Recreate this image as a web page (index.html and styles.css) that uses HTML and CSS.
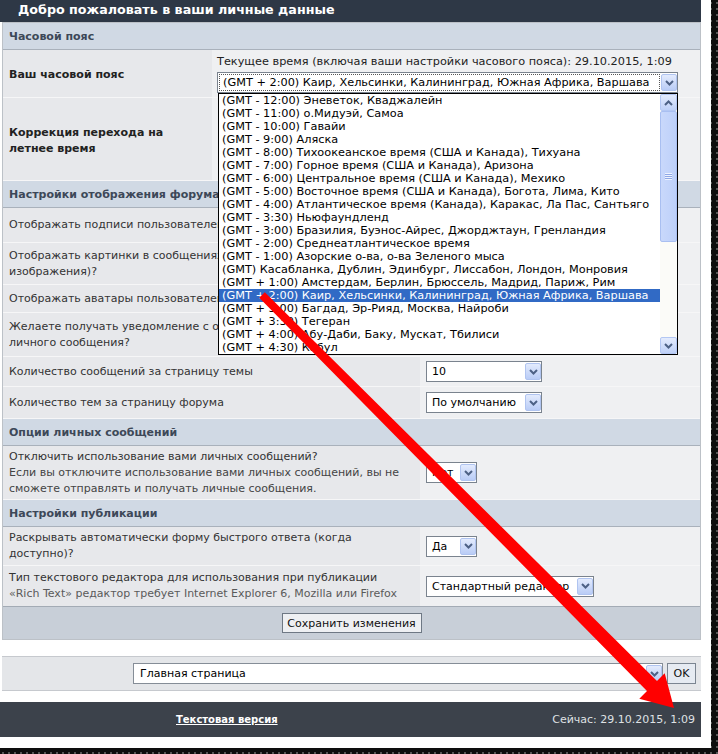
FILE: index.html
```html
<!DOCTYPE html>
<html lang="ru">
<head>
<meta charset="utf-8">
<title>Личные данные</title>
<link rel="stylesheet" href="styles.css">
</head>
<body>
<div class="page">
  <div class="title">Добро пожаловать в ваши личные данные</div>
  <div class="panel">
    <div class="sect">Часовой пояс</div>
    <div class="row tz h48">
      <div class="lbl b">Ваш часовой пояс</div>
      <div class="ctl col">
        <div class="now">Текущее время (включая ваши настройки часового пояса): 29.10.2015, 1:09</div>
        <div class="sel w-tz"><span class="v"><span class="focus">(GMT + 2:00) Каир, Хельсинки, Калининград, Южная Африка, Варшава</span></span><span class="a"><svg width="9" height="6" viewBox="0 0 9 6"><path d="M1 1l3.5 3.5L8 1" fill="none" stroke="#4d6185" stroke-width="2"/></svg></span></div>
      </div>
    </div>
    <div class="row tz h83">
      <div class="lbl b">Коррекция перехода на<br>летнее время</div>
      <div class="ctl"></div>
    </div>
    <div class="sect">Настройки отображения форума</div>
    <div class="row h35">
      <div class="lbl">Отображать подписи пользователей</div>
      <div class="ctl"></div>
    </div>
    <div class="row h42">
      <div class="lbl">Отображать картинки в сообщениях<br>изображения)?</div>
      <div class="ctl"></div>
    </div>
    <div class="row h28">
      <div class="lbl">Отображать аватары пользователей</div>
      <div class="ctl"></div>
    </div>
    <div class="row h44">
      <div class="lbl">Желаете получать уведомление с о<br>личного сообщения?</div>
      <div class="ctl"></div>
    </div>
    <div class="row h30">
      <div class="lbl">Количество сообщений за страницу темы</div>
      <div class="ctl"><div class="sel w116"><span class="v">10</span><span class="a"><svg width="9" height="6" viewBox="0 0 9 6"><path d="M1 1l3.5 3.5L8 1" fill="none" stroke="#4d6185" stroke-width="2"/></svg></span></div></div>
    </div>
    <div class="row h32">
      <div class="lbl">Количество тем за страницу форума</div>
      <div class="ctl"><div class="sel w116"><span class="v">По умолчанию</span><span class="a"><svg width="9" height="6" viewBox="0 0 9 6"><path d="M1 1l3.5 3.5L8 1" fill="none" stroke="#4d6185" stroke-width="2"/></svg></span></div></div>
    </div>
    <div class="sect">Опции личных сообщений</div>
    <div class="row h54">
      <div class="lbl">Отключить использование вами личных сообщений?<br><span class="desc">Если вы отключите использование вами личных сообщений, вы не<br>сможете отправлять и получать личные сообщения.</span></div>
      <div class="ctl"><div class="sel w51"><span class="v">Нет</span><span class="a"><svg width="9" height="6" viewBox="0 0 9 6"><path d="M1 1l3.5 3.5L8 1" fill="none" stroke="#4d6185" stroke-width="2"/></svg></span></div></div>
    </div>
    <div class="sect">Настройки публикации</div>
    <div class="row h39">
      <div class="lbl">Раскрывать автоматически форму быстрого ответа (когда<br>доступно)?</div>
      <div class="ctl"><div class="sel w51"><span class="v">Да</span><span class="a"><svg width="9" height="6" viewBox="0 0 9 6"><path d="M1 1l3.5 3.5L8 1" fill="none" stroke="#4d6185" stroke-width="2"/></svg></span></div></div>
    </div>
    <div class="row h41 last">
      <div class="lbl">Тип текстового редактора для использования при публикации<br><span class="desc light">«Rich Text» редактор требует Internet Explorer 6, Mozilla или Firefox</span></div>
      <div class="ctl"><div class="sel w168"><span class="v">Стандартный редактор</span><span class="a"><svg width="9" height="6" viewBox="0 0 9 6"><path d="M1 1l3.5 3.5L8 1" fill="none" stroke="#4d6185" stroke-width="2"/></svg></span></div></div>
    </div>
    <div class="save"><button class="btn" type="button">Сохранить изменения</button></div>
  </div>

  <div class="nav">
    <div class="sel w530"><span class="v">Главная страница</span><span class="a"><svg width="9" height="6" viewBox="0 0 9 6"><path d="M1 1l3.5 3.5L8 1" fill="none" stroke="#4d6185" stroke-width="2"/></svg></span></div>
    <button class="ok" type="button">OK</button>
  </div>

  <div class="foot">
    <a class="textver" href="#">Текстовая версия</a>
    <span class="clock">Сейчас: 29.10.2015, 1:09</span>
  </div>

  <div class="dd">
    <ul class="opts">
      <li>(GMT - 12:00) Эневеток, Кваджалейн</li>
      <li>(GMT - 11:00) о.Мидуэй, Самоа</li>
      <li>(GMT - 10:00) Гавайи</li>
      <li>(GMT - 9:00) Аляска</li>
      <li>(GMT - 8:00) Тихоокеанское время (США и Канада), Тихуана</li>
      <li>(GMT - 7:00) Горное время (США и Канада), Аризона</li>
      <li>(GMT - 6:00) Центральное время (США и Канада), Мехико</li>
      <li>(GMT - 5:00) Восточное время (США и Канада), Богота, Лима, Кито</li>
      <li>(GMT - 4:00) Атлантическое время (Канада), Каракас, Ла Пас, Сантьяго</li>
      <li>(GMT - 3:30) Ньюфаундленд</li>
      <li>(GMT - 3:00) Бразилия, Буэнос-Айрес, Джорджтаун, Гренландия</li>
      <li>(GMT - 2:00) Среднеатлантическое время</li>
      <li>(GMT - 1:00) Азорские о-ва, о-ва Зеленого мыса</li>
      <li>(GMT) Касабланка, Дублин, Эдинбург, Лиссабон, Лондон, Монровия</li>
      <li>(GMT + 1:00) Амстердам, Берлин, Брюссель, Мадрид, Париж, Рим</li>
      <li class="on">(GMT + 2:00) Каир, Хельсинки, Калининград, Южная Африка, Варшава</li>
      <li>(GMT + 3:00) Багдад, Эр-Рияд, Москва, Найроби</li>
      <li>(GMT + 3:30) Тегеран</li>
      <li>(GMT + 4:00) Абу-Даби, Баку, Мускат, Тбилиси</li>
      <li>(GMT + 4:30) Кабул</li>
    </ul>
    <div class="sb">
      <span class="sbtn"><svg width="9" height="6" viewBox="0 0 9 6"><path d="M1 5l3.5-3.5L8 5" fill="none" stroke="#4d6185" stroke-width="2"/></svg></span>
      <span class="thumb"><span class="grip"></span></span>
      <span class="track"></span>
      <span class="sbtn"><svg width="9" height="6" viewBox="0 0 9 6"><path d="M1 1l3.5 3.5L8 1" fill="none" stroke="#4d6185" stroke-width="2"/></svg></span>
    </div>
  </div>

  <svg class="arrow" width="711" height="748" viewBox="0 0 711 748">
    <polygon points="264.8,292.2 657,681 664.7,673.3 674,708 639.3,698.7 647,691 259.2,297.8" fill="#ff0000"/>
  </svg>
</div>
</body>
</html>
```
FILE: styles.css
```css
* { box-sizing: border-box; }
html, body { margin: 0; padding: 0; }
body {
  width: 718px;
  height: 754px;
  overflow: hidden;
  background-color: #0e0e0e;
  background-image: radial-gradient(circle, #555 0.8px, transparent 1.3px);
  background-size: 6px 6px;
  font-family: "DejaVu Sans", Verdana, sans-serif;
  font-size: 11px;
  color: #333;
}
.page {
  position: relative;
  width: 711px;
  height: 748px;
  background: #fff;
}
.title {
  width: 701px;
  height: 22px;
  background: #2e3846;
  color: #fff;
  font-weight: bold;
  font-size: 12.7px;
  line-height: 19px;
  padding-left: 18px;
  white-space: nowrap;
}
.panel {
  margin-left: 2px;
  width: 699px;
  border: 1px solid #bcc1c7;
}
.sect {
  height: 27px;
  background: #d0d9e4;
  border-bottom: 1px solid #a9b1bb;
  color: #3d4858;
  font-weight: bold;
  display: flex;
  align-items: center;
  padding-left: 6px;
}
.row {
  display: flex;
  border-bottom: 1px solid #f6f6f7;
}
.row.last { border-bottom: 1px solid #a3abb5; }
.h28 { height: 28px; } .h30 { height: 30px; } .h32 { height: 32px; }
.h35 { height: 35px; } .h39 { height: 39px; } .h41 { height: 41px; }
.h42 { height: 42px; } .h44 { height: 44px; } .h48 { height: 48px; }
.h54 { height: 54px; } .h83 { height: 83px; }
.lbl {
  width: 417px;
  flex: none;
  background: #e7e8eb;
  padding-left: 6px;
  display: flex;
  flex-direction: column;
  justify-content: center;
  line-height: 16px;
  white-space: nowrap;
}
.lbl.b { font-weight: bold; color: #222; padding-top: 3px; }
.tz .lbl { width: 209px; }
.desc { color: #444; }
.desc.light { color: #5a5a5a; }
.ctl {
  flex: 1;
  background: #eff0f2;
  padding-left: 6px;
  display: flex;
  align-items: center;
}
.tz .ctl { padding-left: 5px; }
.ctl.col {
  flex-direction: column;
  align-items: flex-start;
  justify-content: flex-start;
  padding-top: 5px;
}
.now { line-height: 14px; color: #222; white-space: nowrap; font-size: 11.3px; }
.sel {
  display: flex;
  height: 21px;
  border: 1px solid #7a838e;
  background: #fff;
  flex: none;
}
.now + .sel { margin-top: 3px; }
.sel .v {
  flex: 1;
  padding-left: 5px;
  line-height: 19px;
  white-space: nowrap;
  overflow: hidden;
  color: #000;
}
.sel .a {
  width: 16px;
  margin: 1px 0 1px 1px;
  flex: none;
  display: flex;
  align-items: center;
  justify-content: center;
  background: linear-gradient(#e3ebfd, #b9ccf6);
  border: 1px solid #b0c4f0;
  border-radius: 2px;
}
.w51 { width: 51px; } .w116 { width: 116px; } .w168 { width: 168px; }
.w530 { width: 530px; }
.w-tz { width: 461px; }
.w-tz .v { padding: 1px 0 1px 1px; line-height: 17px; font-size: 11.3px; }
.focus {
  display: block;
  height: 17px;
  border: 1px dotted #555;
  padding-left: 3px;
  line-height: 15px;
}
.save {
  height: 32px;
  background: #c8cfd8;
  display: flex;
  justify-content: center;
  align-items: flex-start;
  padding-top: 6px;
}
.btn {
  width: 140px;
  height: 20px;
  padding: 0;
  font: inherit;
  color: #111;
  background: #eef0f3;
  border: 1px solid #6e7884;
  border-radius: 0;
}
.nav {
  margin-top: 16px;
  margin-left: 2px;
  width: 699px;
  height: 35px;
  background: #e4e6e9;
  border-top: 1px solid #c6c9ce;
  border-bottom: 1px solid #c6c9ce;
  display: flex;
  align-items: center;
  justify-content: flex-end;
  gap: 4px;
  padding-right: 5px;
}
.nav .sel { border-color: #858d97; }
.nav .v { padding-left: 6px; }
.ok {
  width: 29px;
  height: 21px;
  padding: 0;
  font: inherit;
  color: #111;
  background: #e6ebf2;
  border: 1px solid #7b8591;
  border-radius: 0;
}
.foot {
  margin-top: 11px;
  width: 701px;
  height: 35px;
  background: #3c424b;
  display: flex;
  align-items: center;
  padding-left: 176px;
  padding-right: 6px;
}
.textver { color: #fff; font-weight: bold; font-size: 10px; text-decoration: underline; }
.clock { margin-left: auto; color: #dfe1e4; }
.dd {
  position: absolute;
  left: 218px;
  top: 93px;
  width: 460px;
  height: 262px;
  border: 1px solid #000;
  background: #fff;
  display: flex;
}
.opts {
  list-style: none;
  margin: 0;
  padding: 0;
  flex: 1;
  overflow: hidden;
  font-size: 11.3px;
}
.opts li {
  height: 13px;
  line-height: 13px;
  padding-left: 3px;
  white-space: nowrap;
  color: #000;
}
.opts li.on { background: #316ac5; color: #fff; }
.sb {
  width: 17px;
  flex: none;
  display: flex;
  flex-direction: column;
  background: #fbfbf8;
}
.sbtn {
  height: 17px;
  flex: none;
  display: flex;
  align-items: center;
  justify-content: center;
  background: linear-gradient(#e3ebfd, #bfd1f8);
  border: 1px solid #b3c7f3;
  border-radius: 2px;
}
.thumb {
  height: 131px;
  flex: none;
  display: flex;
  align-items: center;
  justify-content: center;
  background: linear-gradient(90deg, #c9d8fb, #bdd0fa);
  border: 1px solid #a9bff1;
  border-radius: 2px;
}
.grip {
  width: 7px;
  height: 7px;
  background: repeating-linear-gradient(#eef3fe 0 1px, #8fa8e6 1px 2px);
}
.track { flex: 1; }
.arrow {
  position: absolute;
  left: 0;
  top: 0;
  pointer-events: none;
}
```
